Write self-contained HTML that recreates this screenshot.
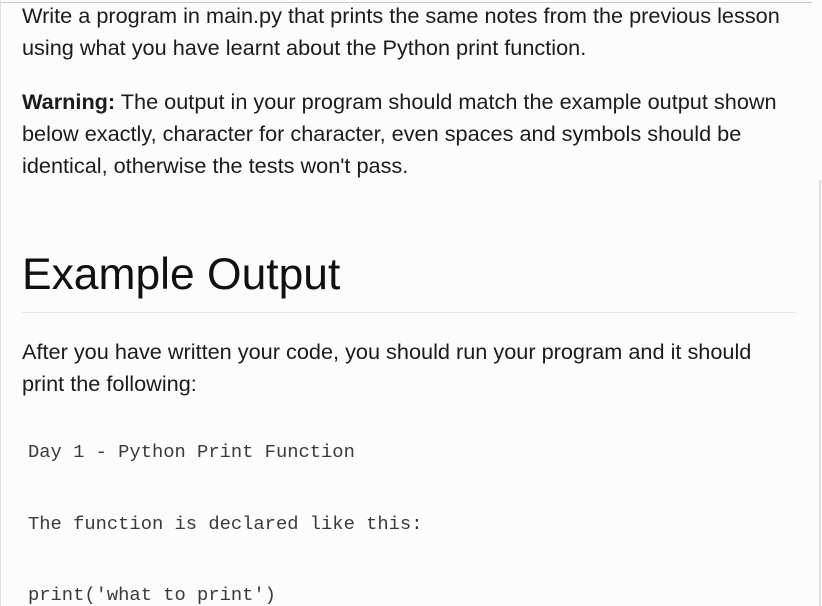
<!DOCTYPE html>
<html><head><meta charset="utf-8"><style>
html,body{margin:0;padding:0;width:822px;height:606px;overflow:hidden;background:#fcfcfc;}
body{position:relative;font-family:"Liberation Sans",sans-serif;color:#1b1b1b;}
.topline{position:absolute;left:0;top:2px;width:812px;height:1px;background:#c8c8c8;}
.leftline{position:absolute;left:0;top:0;width:1px;height:606px;background:#e2e2e2;}
.rightline{position:absolute;left:819px;top:180px;width:2px;height:426px;background:#e0e0e0;}
.t{position:absolute;left:22px;font-size:21.7px;white-space:nowrap;line-height:24px;}
h1{position:absolute;left:22px;top:250px;margin:0;font-size:44.4px;font-weight:normal;line-height:50px;color:#111;}
.hr{position:absolute;left:22px;top:312px;width:774px;height:1px;background:#e6e6e6;}
.c{position:absolute;left:28px;font-family:"Liberation Mono",monospace;font-size:18.8px;white-space:pre;color:#3a3a3a;line-height:24px;}
</style></head><body>
<div class="topline"></div><div class="leftline"></div><div class="rightline"></div>
<div class="t" style="top:4px">Write a program in main.py that prints the same notes from the previous lesson</div>
<div class="t" style="top:36px">using what you have learnt about the Python print function.</div>
<div class="t" style="top:90px"><b>Warning:</b> The output in your program should match the example output shown</div>
<div class="t" style="top:122px">below exactly, character for character, even spaces and symbols should be</div>
<div class="t" style="top:154px">identical, otherwise the tests won't pass.</div>
<h1>Example Output</h1>
<div class="hr"></div>
<div class="t" style="top:340px">After you have written your code, you should run your program and it should</div>
<div class="t" style="top:372px">print the following:</div>
<div class="c" style="top:440px">Day 1 - Python Print Function</div>
<div class="c" style="top:512px">The function is declared like this:</div>
<div class="c" style="top:583px">print('what to print')</div>
</body></html>
